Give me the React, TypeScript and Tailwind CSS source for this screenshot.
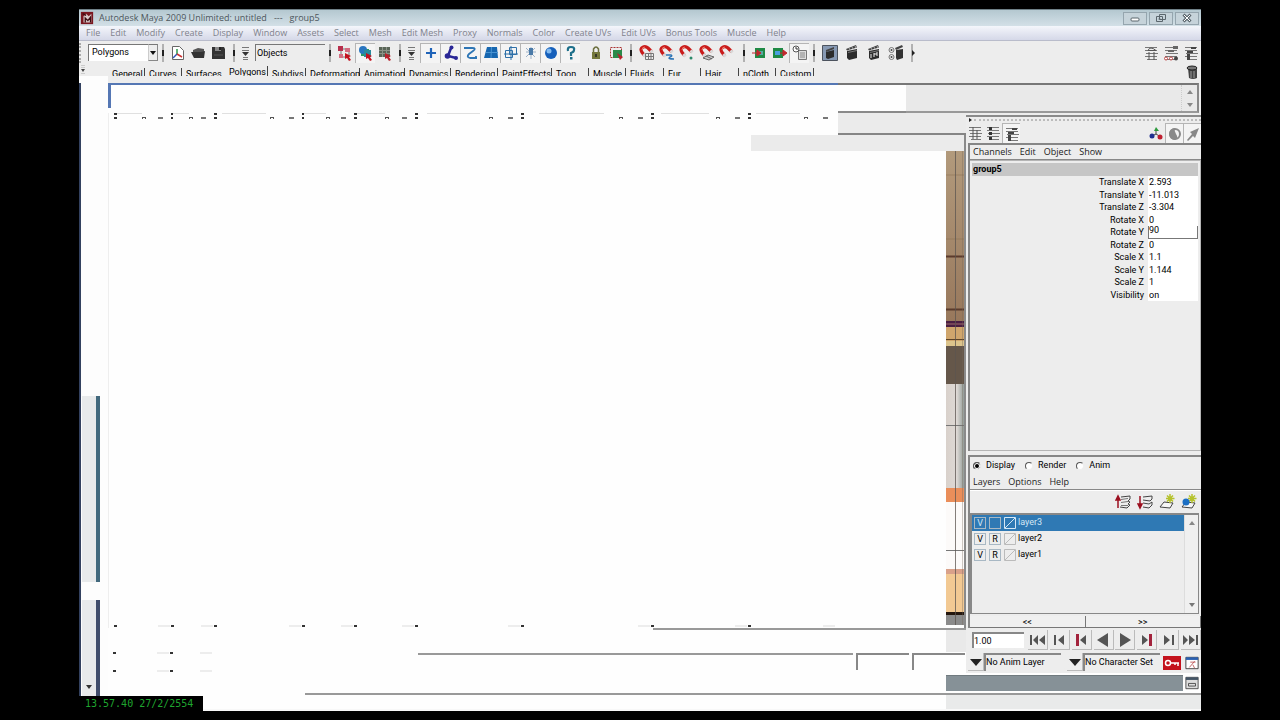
import type { ReactNode } from "react";

const ui = "font-[Roboto,'Liberation_Sans',sans-serif] text-[9px]";
const segoe = "font-['Open_Sans','Noto_Sans',sans-serif] text-[9px]";

const menus = ["File", "Edit", "Modify", "Create", "Display", "Window", "Assets", "Select", "Mesh", "Edit Mesh", "Proxy", "Normals", "Color", "Create UVs", "Edit UVs", "Bonus Tools", "Muscle", "Help"];

const shelves = [
  { name: "General", width: "w-[37px]" },
  { name: "Curves", width: "w-[37px]" },
  { name: "Surfaces", width: "w-[43px]" },
  { name: "Polygons", width: "w-[43px]" },
  { name: "Subdivs", width: "w-[38px]" },
  { name: "Deformation", width: "w-[54px]" },
  { name: "Animation", width: "w-[45px]" },
  { name: "Dynamics", width: "w-[46px]" },
  { name: "Rendering", width: "w-[47px]" },
  { name: "PaintEffects", width: "w-[54px]" },
  { name: "Toon", width: "w-[37px]" },
  { name: "Muscle", width: "w-[37px]" },
  { name: "Fluids", width: "w-[38px]" },
  { name: "Fur", width: "w-[37px]" },
  { name: "Hair", width: "w-[38px]" },
  { name: "nCloth", width: "w-[37px]" },
  { name: "Custom", width: "w-[38px]" },
];

const channels = [
  { name: "Translate X", value: "2.593" },
  { name: "Translate Y", value: "-11.013" },
  { name: "Translate Z", value: "-3.304" },
  { name: "Rotate X", value: "0" },
  { name: "Rotate Y", value: "90", active: true },
  { name: "Rotate Z", value: "0" },
  { name: "Scale X", value: "1.1" },
  { name: "Scale Y", value: "1.144" },
  { name: "Scale Z", value: "1" },
  { name: "Visibility", value: "on" },
];

const layers = [
  { name: "layer3", ref: "", selected: true },
  { name: "layer2", ref: "R", selected: false },
  { name: "layer1", ref: "R", selected: false },
];

// widths of the tool cells, each one starts with a small dark mark
const cells = ["w-[57px]", "w-[43px]", "w-[88px]", "w-[52px]", "w-[61px]", "w-[106px]", "w-[130px]", "w-[97px]", "w-[88px]"];

function Svg({ children, size = "size-4" }: { children: ReactNode; size?: string }) {
  return (
    <svg viewBox="0 0 16 16" className={`${size} shrink-0`} fill="none" aria-hidden="true">
      {children}
    </svg>
  );
}

function Tool({ label, children, sunken = false, width = "w-5" }: { label: string; children: ReactNode; sunken?: boolean; width?: string }) {
  return (
    <button
      type="button"
      aria-label={label}
      className={`flex h-5 shrink-0 items-center justify-center ${width} ${
        sunken ? "border-t border-l border-[#b5b5b5] bg-[#f4f4f4]" : ""
      }`}
    >
      <Svg>{children}</Svg>
    </button>
  );
}

function Bar({ arrow = false }: { arrow?: boolean }) {
  return (
    <svg viewBox="0 0 10 20" className="h-5 w-2.5 shrink-0" aria-hidden="true">
      <path d="M5 1v18" stroke="#777" />
      <path d={arrow ? "M5 7l3 3-3 3z" : "M4 7h2v6H4z"} fill="#222" />
    </svg>
  );
}

function Mask() {
  return (
    <svg viewBox="0 0 12 16" className="h-4 w-3 shrink-0" aria-hidden="true">
      <path d="M3 2.500h7M3 5.500h7M4 12.500h5M4 14.500h5" stroke="#777" />
      <path d="M3 7h7l-3.500 4z" fill="#333" />
    </svg>
  );
}

function Magnet({ children }: { children?: ReactNode }) {
  return (
    <>
      <path d="M5.500 10.500L2.800 7Q.800 3.500 3.800 2.200Q6.500 .800 9 3L12.500 6.500" stroke="#c91c1c" strokeWidth="3.200" />
      <path d="M4.500 9l2 2.600M11.500 5.500l2 2" stroke="#d8d8d8" strokeWidth="3" />
      <path d="M3 5q0-3 3-3" stroke="#ee7a6a" />
      {children}
    </>
  );
}

function Clapper() {
  return (
    <>
      <path d="M3 6l10-2v9l-8 2-2-2z" fill="#2c2c2c" />
      <path d="M2 4l10-4 1 2.500-10 3z" fill="#444" />
      <path d="M5 3l1 2M8 2l1 2M11 1l1 2" stroke="#aaa" />
      <path d="M4 7.500l9-2" stroke="#777" />
    </>
  );
}

function ListIcon({ variant = 0 }: { variant?: number }) {
  return (
    <>
      <path d="M2 2.500h12M2 5.500h12M3 8.500h12M2 11.500h12M4 14.500h10" stroke="#777" />
      {variant === 0 && <path d="M6 2v12M10 5v9" stroke="#555" />}
      {variant === 1 && <path d="M4 2h3v3H4zM4 7h3v3H4zM4 12h3v3H4z" fill="#333" />}
      {variant === 2 && <path d="M8 2h5v2H8zM4 6h6v2H4zM4 9h3v6H4z" fill="#444" />}
      {variant === 3 && (
        <>
          <path d="M5 5.500q2-5 8 0z" fill="#eee" stroke="#555" />
          <path d="M6 7v8M11 7v8" stroke="#555" />
        </>
      )}
      {variant === 4 && (
        <>
          <path d="M10 1h5v3h-5zM5 5h6v2H5z" fill="#666" />
          <circle cx="3" cy="13.500" r="1.500" fill="#fff" stroke="#b44" />
          <circle cx="8" cy="13.500" r="1.500" fill="#fff" stroke="#b44" />
          <circle cx="13" cy="13.500" r="2" fill="#444" />
        </>
      )}
    </>
  );
}

function Star() {
  return <path d="M11 0v9M7 4.500h8.500M8 1.500l6 6M14 1.500l-6 6" stroke="#b5c22c" strokeWidth="1.500" />;
}

function TitleBar() {
  return (
    <header className="flex h-[17px] items-center border-t border-[#6f8087] bg-linear-to-b from-[#b4c8d0] to-[#d3e0e7] pl-px">
      <Svg size="size-3.5">
        <rect x="1" y="1" width="14" height="14" fill="#7a1720" />
        <path d="M4 13V6l3-3 3 3 3-3v10z" fill="#d9c9c9" />
        <path d="M6 13V8l3 3 3-4v6M3 3l4 2" stroke="#3d0d12" strokeWidth="1.500" />
      </Svg>
      <h1 className={`${segoe} ml-[5px] flex-1 leading-4 whitespace-pre text-[#4c565c]`}>
        Autodesk Maya 2009 Unlimited: untitled{"   "}---{"   "}group5
      </h1>
      <div className="mr-[2px] flex gap-[2px]">
        {["Minimize", "Restore", "Close"].map((name) => (
          <button key={name} type="button" aria-label={name} className="flex h-[13px] w-6 items-center justify-center border border-[#95a5ae] bg-[#c6d3da]">
            <svg viewBox="0 0 12 10" className="h-2.5 w-3" fill="none" stroke="#5b666d">
              {name === "Minimize" && <rect x="2" y="5" width="8" height="3" rx="1" fill="#fff" />}
              {name === "Restore" && <path d="M4.500 1.500h6v5h-6zM1.500 3.500h6v5h-6zM3.500 6h2" />}
              {name === "Close" && (
                <>
                  <path d="M2.500 1.500l7 7M9.500 1.500l-7 7" strokeWidth="3" />
                  <path d="M3 2l6 6M9 2L3 8" stroke="#fff" />
                </>
              )}
            </svg>
          </button>
        ))}
      </div>
    </header>
  );
}

function StatusLine() {
  return (
    <div className="flex h-[23px] items-center overflow-hidden">
      <div className="mr-px h-5 w-2 shrink-0 border-l-2 border-dotted border-[#aaa]" />
      <select aria-label="Menu set" className={`${ui} h-[17px] w-[60px] shrink-0 appearance-none border-t border-l border-[#777] bg-white pl-[3px] text-black`}>
        <option>Polygons</option>
      </select>
      <div className="flex h-[17px] w-2.5 shrink-0 items-center justify-center border border-t-[#777] border-r-[#888] border-b-[#888] border-l-[#ccc]">
        <svg viewBox="0 0 8 8" className="size-2"><path d="M1 2h6L4 6z" fill="#111" /></svg>
      </div>
      <Bar />
      <Tool label="New scene">
        <path d="M2.500 1.500h7l4 4v9h-11z" fill="#fff" stroke="#666" />
        <path d="M7 9V4" stroke="#2a9a48" strokeWidth="1.500" />
        <path d="M7 9l-4 4" stroke="#2f55b5" strokeWidth="1.500" />
        <path d="M7 9l5 3" stroke="#c33" strokeWidth="1.500" />
      </Tool>
      <Tool label="Open scene">
        <path d="M3 5l5-2 6 1v3H5l-2 4z" fill="#555" />
        <path d="M1 7h10l4-1-1 7H4z" fill="#333" />
      </Tool>
      <Tool label="Save scene">
        <path d="M2 2h12l1 2v10H2z" fill="#333" />
        <path d="M5 2h6v4H5z" fill="#888" />
        <path d="M9 2h2v3H9z" fill="#222" />
        <path d="M4 10h9" stroke="#555" />
      </Tool>
      <div className="w-px shrink-0" />
      <Bar />
      <Mask />
      <input
        aria-label="Selection mask"
        defaultValue="Objects"
        className={`${ui} ml-1 h-[17px] w-[70px] shrink-0 border-t border-l border-[#777] bg-[#ededed] pl-px text-black`}
      />
      <Bar />
      <Tool label="Select by hierarchy">
        <path d="M4 4h8v8M4 5v7h7" stroke="#777" />
        <path d="M1 1h5v5H1z" fill="#b8304d" />
        <path d="M8 3h5v4H8zM2 9h4v4H2z" fill="#d46c80" />
        <path d="M8 8l6 3-2 1 2 3-2 1-2-3-2 1z" fill="#c3121f" />
      </Tool>
      <Tool label="Select by object" sunken>
        <path d="M3 4h8v7H3z" fill="#2b9a64" />
        <circle cx="5" cy="5" r="4" fill="#2a76c0" />
        <path d="M6 5h7v7H6z" fill="#2a8a9c" />
        <path d="M8 8l6 3-2 1 2 3-2 1-2-3-2 1z" fill="#c3121f" />
      </Tool>
      <Tool label="Select by component">
        <path d="M2 2h11v10H2z" fill="#5a6558" />
        <path d="M2 5.500h11M2 8.500h11M5.500 2v10M9.500 2v10" stroke="#8b9488" />
        <path d="M8 8l6 3-2 1 2 3-2 1-2-3-2 1z" fill="#b7222c" />
      </Tool>
      <Bar />
      <Mask />
      <div className="w-[3px] shrink-0" />
      <Tool label="Handles" sunken><path d="M8 3v10M3 8h10" stroke="#1f63b8" strokeWidth="2.200" /></Tool>
      <Tool label="Joints" sunken>
        <path d="M8 3L5 11l8 2" stroke="#2a2796" strokeWidth="2.500" />
        <circle cx="8.500" cy="2.500" r="2" fill="#2a2796" /><circle cx="4.500" cy="11" r="2.800" fill="#2a2796" /><circle cx="13" cy="13" r="2" fill="#2a2796" />
      </Tool>
      <Tool label="Curves" sunken><path d="M1 3h8q5 0 1 3L6 9q-3 3 1 4h7M13 11v3" stroke="#2d75b5" strokeWidth="1.800" /></Tool>
      <Tool label="Surfaces" sunken>
        <path d="M4 2h10l1 11H1z" fill="#1767b0" />
        <path d="M3 7.500h12M8.500 2L8 13" stroke="#4a94d2" />
      </Tool>
      <Tool label="Deformations" sunken><path d="M2.500 5.500h7v7h-7zM6.500 2.500h7v7h-7zM1 9h14M8 1v14" stroke="#2f70a8" /></Tool>
      <Tool label="Dynamics" sunken>
        <path d="M3 3l9 9M12 3l-9 9M8 2v12M3 7h10" stroke="#9db2c8" />
        <path d="M6 3h4v7H6z" fill="#4a7aa8" />
      </Tool>
      <Tool label="Rendering" sunken>
        <circle cx="8" cy="8" r="6" fill="#1660bb" /><circle cx="6" cy="6" r="2.500" fill="#82baf0" />
      </Tool>
      <Tool label="Miscellaneous" sunken>
        <path d="M5 6q-1-4 3-4t3 3q0 2-3 3v3" stroke="#1d6f8a" strokeWidth="2.200" />
        <path d="M7 12h2.500v2.500H7z" fill="#1d6f8a" />
      </Tool>
      <div className="w-1.5 shrink-0" />
      <Tool label="Lock selection">
        <path d="M5.500 7V4q2.500-4 5 0v3" stroke="#6d7040" strokeWidth="1.500" />
        <path d="M4 7h8v7H4z" fill="#75783c" />
        <path d="M8 9v3" stroke="#222" strokeWidth="1.500" />
      </Tool>
      <Tool label="Highlight selection">
        <path d="M2.500 2.500h11v10h-11z" stroke="#a33" strokeDasharray="2 1" />
        <path d="M5 5h9v8H5z" fill="#2b8a4a" />
        <path d="M9 8l6 4-3 3z" fill="#b7222c" />
      </Tool>
      <Bar />
      <div className="w-px shrink-0" />
      <Tool label="Snap to grids">
        <Magnet><path d="M6.500 8.500h8v6h-8zM9.500 8v6M12 8v6M6 11.500h8" stroke="#777" /></Magnet>
      </Tool>
      <Tool label="Snap to curves">
        <Magnet><path d="M7 10h5q2 1-1 2-3 2 4 2" stroke="#2d75b5" strokeWidth="1.500" /></Magnet>
      </Tool>
      <Tool label="Snap to points"><Magnet><circle cx="12" cy="13" r="1.500" fill="#2b8a6a" /></Magnet></Tool>
      <Tool label="Snap to view planes">
        <Magnet><path d="M4 13l5-3 6 2-5 3zM7 11l6 3" stroke="#666" fill="#ccc" /></Magnet>
      </Tool>
      <Tool label="Make live"><Magnet /></Tool>
      <div className="w-0.5 shrink-0" />
      <Bar />
      <Tool label="Input connections">
        <path d="M4 3h10v10H4z" fill="#1f8a45" /><path d="M7 6h5v4H7z" fill="#58a7a3" />
        <path d="M1 8h5M6 5l4 3-4 3z" stroke="#c1272d" fill="#c1272d" />
      </Tool>
      <Tool label="Output connections">
        <path d="M2 3h10v10H2z" fill="#1f8a45" /><path d="M4 6h5v4H4z" fill="#4a9fe0" />
        <path d="M9 8h4M12 5l4 3-4 3z" stroke="#c1272d" fill="#c1272d" />
      </Tool>
      <Tool label="Construction history" sunken>
        <path d="M6.500 5.500h8v9h-8z" fill="#ddd" stroke="#777" />
        <path d="M8 8h5M8 10h5M8 12h5" stroke="#888" />
        <circle cx="4" cy="4" r="3" fill="#fff" stroke="#555" />
        <path d="M4 2v2h2" stroke="#333" />
      </Tool>
      <Bar />
      <Tool label="Render view" width="w-[22px]">
        <path d="M.500 .500h15v15H.500z" fill="#8799b3" stroke="#4c535e" />
        <path d="M4 7l8-2v7l-6 2-2-1z" fill="#2c2c2c" />
        <path d="M4 5l8-3v2L4 7z" fill="#444" />
      </Tool>
      <Tool label="Render frame" width="w-[22px]"><Clapper /></Tool>
      <Tool label="IPR render" width="w-[22px]">
        <Clapper />
        <path d="M5 9v4M8 8v4M8 9h3M11 7v4" stroke="#eee" />
      </Tool>
      <Tool label="Render settings" width="w-[22px]">
        <path d="M8 5l7-1v9l-6 2-1-2z" fill="#333" />
        <path d="M7 3l7-3 1 2-7 3z" fill="#444" />
        <circle cx="3.500" cy="5" r="2.500" stroke="#777" /><circle cx="3.500" cy="12" r="2.500" stroke="#777" />
        <circle cx="3.500" cy="5" r="1" fill="#444" /><circle cx="3.500" cy="12" r="1" fill="#444" />
      </Tool>
      <Bar arrow />
      <div className="flex-1" />
      <Tool label="Attribute editor"><ListIcon variant={3} /></Tool>
      <Tool label="Tool settings"><ListIcon variant={4} /></Tool>
      <Tool label="Channel box"><ListIcon variant={2} /></Tool>
    </div>
  );
}

function Shelf() {
  return (
    <div className="flex h-[19px]">
      <div className="flex w-[29px] shrink-0 flex-col">
        <div className="flex h-3 items-center pl-[2px]">
          <svg viewBox="0 0 4 10" className="h-2.5 w-1"><path d="M0 4h4L2 7z" fill="#444" /><path d="M1 0v3M3 0v3M1 8v2M3 8v2" stroke="#aaa" strokeDasharray="1 1" /></svg>
        </div>
        <div className="flex-1 bg-[#fdfdfd]" />
      </div>
      <div className={`${ui} flex h-3 flex-1 items-start overflow-hidden leading-3`} role="tablist">
        {shelves.map(({ name, width }) => (
          <button
            key={name}
            type="button"
            role="tab"
            aria-selected={name === "Polygons"}
            className={`h-3 shrink-0 border-r border-[#444] pl-[4px] text-left whitespace-nowrap text-black ${width} ${
              name === "Polygons" ? "mt-[2px]" : "mt-[4px]"
            } ${name === "Surfaces" ? "border-r-transparent" : ""}`}
          >
            {name}
          </button>
        ))}
      </div>
      <button type="button" aria-label="Delete" className="mr-px size-4">
        <Svg>
          <path d="M4 4h9v10q-4 2-8 0z" fill="#444" />
          <ellipse cx="8" cy="4" rx="5" ry="2" fill="#777" stroke="#222" />
          <path d="M7 7v7M10 7v7" stroke="#999" />
        </Svg>
      </button>
    </div>
  );
}

function ShelfStrip() {
  return (
    <div className="flex h-[30px]">
      <div className="flex w-[730px] flex-col">
        <div className="h-[25px] border-t-2 border-l-[3px] border-[#5577b4] bg-[#fefefe]" />
      </div>
      <div className="w-[68px] border-y-2 border-t-[#777] border-b-[#8a8a8a] bg-[#fefefe]" />
      <div className="mr-[2px] flex flex-1 justify-end border-y-2 border-r-2 border-t-[#777] border-r-[#888] border-b-[#999] bg-[#e9e9e9]">
        <div className="flex w-4 flex-col items-center justify-around border-l border-dotted border-[#ccc]">
          <svg viewBox="0 0 6 4" className="h-1 w-1.5"><path d="M0 4l3-4 3 4z" fill="#888" /></svg>
          <svg viewBox="0 0 6 4" className="h-1 w-1.5"><path d="M0 0h6L3 4z" fill="#888" /></svg>
        </div>
      </div>
    </div>
  );
}

function ToolCells() {
  return (
    <div className="flex h-1.5 flex-1 overflow-hidden pl-[5px]">
      {cells.map((width, i) => (
        <div key={i} className={`${width} flex shrink-0 justify-between`}>
          <div className="flex w-[3px] flex-col justify-between">
            <div className="h-[2px] bg-[#333]" />
            <div className="h-[2px] bg-[#333]" />
          </div>
          <div className="w-1/2 border-t border-[#e0e0e0]" />
          <div className="mr-2 flex w-6 items-end justify-between">
            <div className="h-[2px] w-1 border-x border-t border-[#555]" />
            <div className="h-[2px] w-[5px] bg-[#777]" />
          </div>
        </div>
      ))}
    </div>
  );
}

function Marks({ count }: { count: number }) {
  return (
    <div className="flex h-[3px] overflow-hidden pl-[5px]">
      {cells.slice(0, count).map((width, i) => (
        <div key={i} className={`${width} flex shrink-0 justify-between`}>
          <div className="h-[2px] w-[3px] bg-[#333]" />
          <div className="mr-px h-[2px] w-3 bg-[#ededed]" />
        </div>
      ))}
    </div>
  );
}

function ImagePlane() {
  return (
    <svg viewBox="0 0 18 474" preserveAspectRatio="none" className="h-0 min-h-full w-[18px] shrink-0" aria-hidden="true">
      <defs>
        <linearGradient id="wall" x1="0" y1="0" x2="0" y2="1">
          <stop offset="0" stopColor="#b29a7c" />
          <stop offset="1" stopColor="#98785c" />
        </linearGradient>
        <linearGradient id="glow" x1="0" y1="0" x2="1" y2="0">
          <stop offset="0" stopColor="#d9d1cb" />
          <stop offset=".6" stopColor="#ded9d5" />
          <stop offset="1" stopColor="#929c98" />
        </linearGradient>
      </defs>
      <rect width="18" height="170" fill="url(#wall)" />
      <path d="M0 24h18M0 88h18" stroke="#8d7355" opacity=".6" />
      <path d="M0 105.500h18M0 158.500h18" stroke="#5b3b2c" strokeWidth="2" />
      <rect y="170" width="18" height="6" fill="#4a1e42" />
      <path d="M0 173h18" stroke="#a06a6a" />
      <rect y="176" width="18" height="19" fill="#d0a66d" />
      <path d="M0 188.500h18" stroke="#5f4528" />
      <rect y="190" width="18" height="5" fill="#dcc48c" />
      <rect y="195" width="18" height="38" fill="#65574a" />
      <rect y="233" width="18" height="104" fill="url(#glow)" />
      <path d="M0 274.500h18" stroke="#767676" />
      <rect y="337" width="18" height="14" fill="#ea8e5a" />
      <rect y="351" width="18" height="67" fill="#fcfaf9" />
      <path d="M0 399.500h18" stroke="#777" />
      <rect y="418" width="18" height="44" fill="#f2c993" />
      <rect y="418" width="18" height="5" fill="#d9a18a" />
      <rect y="461" width="18" height="3" fill="#24170f" />
      <rect y="464" width="18" height="10" fill="#8b8b8b" />
      <path d="M9.500 0v474" stroke="#5c5550" opacity=".75" />
      <path d="M16.500 0v474" stroke="#75675a" opacity=".35" />
    </svg>
  );
}

function Viewport() {
  return (
    <section className="flex min-w-0 flex-1 flex-col border-l border-[#eeeeee]">
      <div className="flex h-[22px] items-start">
        <ToolCells />
        <div className="h-[22px] w-[128px] border-b-2 border-[#858585] bg-[#ebebeb]" />
      </div>
      <div className="flex flex-1 flex-col border-r-2 border-[#8a8a8a] bg-[#fefefe]">
        <div className="ml-auto h-4 w-[213px] bg-[#ebebeb]" />
        <div className="flex flex-1">
          <div className="flex-1 bg-[#fefefe]" />
          <ImagePlane />
        </div>
        <Marks count={9} />
      </div>
    </section>
  );
}

function ChannelBox() {
  return (
    <section className="flex flex-1 flex-col border-t-2 border-l-2 border-[#868686]">
      <nav className={`${segoe} flex h-[15px] items-center gap-2 border-b border-[#888] pl-[3px] text-[#222]`}>
        {["Channels", "Edit", "Object", "Show"].map((name) => (
          <button key={name} type="button">{name}</button>
        ))}
      </nav>
      <div className="flex-1 border-t border-r border-b border-[#b5b5b5] px-[2px] pt-[2px]">
        <h2 className={`${ui} h-[13px] bg-[#c6c6c6] pl-px leading-[13px] font-bold text-black`}>group5</h2>
        <div className={`${ui} grid h-[125px] grid-rows-10`}>
          {channels.map((c) => (
            <div key={c.name} className="flex items-center justify-end text-black">
              <label htmlFor={c.name} className="pr-1 leading-3">{c.name}</label>
              <input
                id={c.name}
                defaultValue={c.value}
                className={`h-full w-[50px] bg-white ${c.active ? "border-r border-b border-l border-[#777] pb-1" : "border-l border-white"}`}
              />
            </div>
          ))}
        </div>
      </div>
    </section>
  );
}

function LayerEditor() {
  return (
    <section className="mt-1 border-t-2 border-l-2 border-[#868686]">
      <div className={`${ui} flex h-[18px] items-center pl-[3px] text-black`}>
        {["Display", "Render", "Anim"].map((name) => (
          <label key={name} className="mr-[10px] flex items-center gap-[5px]">
            <input
              type="radio"
              name="layer-mode"
              defaultChecked={name === "Display"}
              className="size-2 appearance-none rounded-full border border-[#eee] border-t-[#555] border-l-[#555] bg-white checked:bg-black checked:shadow-[inset_0_0_0_1px_white]"
            />
            {name}
          </label>
        ))}
      </div>
      <nav className={`${segoe} flex h-[15px] items-center gap-2 border-b border-[#888] pl-[3px] text-[#222]`}>
        {["Layers", "Options", "Help"].map((name) => (
          <button key={name} type="button">{name}</button>
        ))}
      </nav>
      <div className="flex h-[23px] items-center justify-end gap-0.5 border-t border-white pr-[2px]">
        <Tool label="Move layer up">
          <path d="M6 3l9-1v3l-2 2 2 1-2 2 2 1-3 3-7-1" stroke="#444" /><path d="M6 5.500l7-1M6 8.500l7-1M6 11.500h7" stroke="#777" />
          <path d="M3 14V5M1 6l2-4 2 4z" stroke="#9c1020" strokeWidth="1.500" fill="#9c1020" />
        </Tool>
        <Tool label="Move layer down">
          <path d="M6 3l9-1v3l-2 2-7-1M6 9l6 1 3-2v3M6 13l6 1 3-3" stroke="#444" />
          <path d="M3 2v9M1 10l2 4 2-4z" stroke="#9c1020" strokeWidth="1.500" fill="#9c1020" />
        </Tool>
        <Tool label="New empty layer">
          <path d="M1 13l4-5 9 1-3 5z" fill="#f7f7f7" stroke="#444" /><Star />
        </Tool>
        <Tool label="New layer from selected">
          <path d="M1 13l4-5 9 1-3 5z" fill="#f7f7f7" stroke="#444" /><Star /><circle cx="5" cy="8" r="3.500" fill="#1c6fc4" />
        </Tool>
      </div>
      <div className="mr-[2px] flex h-[101px] border border-t-2 border-l-2 border-[#888]">
        <ul className={`${ui} flex-1`}>
          {layers.map((l) => (
            <li key={l.name} className={`flex h-4 items-center ${l.selected ? "bg-[#2f79b4] text-[#d4e7f5]" : "text-black"}`}>
              <button type="button" aria-label={`Visibility ${l.name}`} className="mr-[3px] ml-0.5 h-3 w-3 border border-[#a8b8c4] text-center leading-[10px]">V</button>
              <button type="button" aria-label={`Reference ${l.name}`} className="mr-[3px] h-3 w-3 border border-[#a8b8c4] text-center leading-[10px]">{l.ref}</button>
              <svg viewBox="0 0 12 12" className="mr-[2px] size-3" fill="none" stroke={l.selected ? "#d4e7f5" : "#bbb"}><path d="M.500 11.500V.500h11M.500 11.500l11-11M11.500 1v10.500H1" /></svg>
              {l.name}
            </li>
          ))}
        </ul>
        <div className="flex w-[14px] flex-col items-center justify-between border-l border-[#ddd] bg-[#f0f0f0] py-1.5">
          <svg viewBox="0 0 6 4" className="h-1 w-1.5"><path d="M0 4l3-4 3 4z" fill="#888" /></svg>
          <svg viewBox="0 0 6 4" className="h-1 w-1.5"><path d="M0 0h6L3 4z" fill="#777" /></svg>
        </div>
      </div>
      <div className={`${ui} mt-[2px] flex h-3 leading-3 text-black`}>
        <button type="button" className="flex-1 border-r border-b border-[#777] bg-[#f0f0f0]">&lt;&lt;</button>
        <button type="button" className="flex-1 border-r border-b border-[#777] bg-[#f0f0f0]">&gt;&gt;</button>
      </div>
    </section>
  );
}

function Dock() {
  return (
    <aside className="flex w-[235px] shrink-0 flex-col pt-[2px]">
      <div className="flex h-2 items-center border-t-2 border-[#8a8a8a] pl-[3px]">
        <svg viewBox="0 0 3 4" className="h-1 w-[3px]"><path d="M0 0l3 2-3 2z" fill="#222" /></svg>
        <div className="ml-0.5 flex-1 border-t-2 border-dotted border-[#bbb]" />
      </div>
      <div className="flex h-5 items-center">
        <Tool label="Channel names" width="w-[18px]"><ListIcon variant={0} /></Tool>
        <Tool label="Channel list" width="w-[18px]"><ListIcon variant={1} /></Tool>
        <Tool label="Channel layout" width="w-[18px]" sunken><ListIcon variant={2} /></Tool>
        <div className="flex-1" />
        <Tool label="Manipulators" width="w-[18px]">
          <path d="M8 9V4M8 9l-4 2M8 9l5 3" stroke="#444" /><path d="M8 2l3 4H6z" fill="#2c9a3c" />
          <circle cx="4" cy="11" r="2.500" fill="#20308f" /><circle cx="12" cy="12" r="2.500" fill="#bf1f30" />
        </Tool>
        <Tool label="Speed" width="w-[18px]" sunken>
          <circle cx="8" cy="8" r="5" fill="#f4f4f4" stroke="#8a8a8a" strokeWidth="2" /><path d="M8 2a6 6 0 000 12q4-2 1-6-2-3-1-6z" fill="#8a8a8a" />
        </Tool>
        <Tool label="Hyperbolic" width="w-[18px]" sunken><path d="M14 2L10 12 8 10l-5 5-1-1 5-6-2-2z" fill="#888" /></Tool>
      </div>
      <div className="flex flex-1 flex-col pl-[2px]">
        <ChannelBox />
        <LayerEditor />
      </div>
    </aside>
  );
}

const playback = [
  { name: "Go to start", d: "M0 3h2v10H0zM8 3v10L3 8zM15 3v10L9 8z" },
  { name: "Step back frame", d: "M3 3h2v10H3zM13 3v10L7 8z" },
  { name: "Step back key", d: "M13 3v10L7 8z", key: "M3 2h3v12H3z" },
  { name: "Play backwards", d: "M13 1v14L2 8z" },
  { name: "Play forwards", d: "M3 1v14l11-7z" },
  { name: "Step forward key", d: "M3 3v10l6-5z", key: "M10 2h3v12h-3z" },
  { name: "Step forward frame", d: "M3 3v10l6-5zM11 3h2v10h-2z" },
  { name: "Go to end", d: "M1 3v10l5-5zM7 3v10l6-5zM14 3h2v10h-2z" },
];

function TimeControls() {
  return (
    <div className="flex h-6">
      <div className="ml-[545px] flex-1 border-t-2 border-[#999]" />
      <div className="w-5 border-t-2 border-[#999] bg-[#e9e9e9]" />
      <div className="flex w-[235px] items-center pl-1.5">
        <input aria-label="Current time" defaultValue="1.00" className={`${ui} mr-1 h-4 w-[52px] border-t-2 border-l-2 border-[#888] bg-white text-black`} />
        <div className="flex flex-1 justify-between">
          {playback.map((p) => (
            <button key={p.name} type="button" aria-label={p.name} className="flex h-5 w-5 items-center justify-center border-r border-b border-[#bbb]">
              <Svg>
                <path d={p.d} fill="#555" />
                {p.key && <path d={p.key} fill="#a3233c" />}
              </Svg>
            </button>
          ))}
        </div>
      </div>
    </div>
  );
}

function SetSelect({ name }: { name: string }) {
  return (
    <>
      <div className="flex w-4 items-center justify-center border-r border-b border-[#bbb]">
        <svg viewBox="0 0 12 8" className="h-2 w-3"><path d="M0 1h12L6 8z" fill="#222" /></svg>
      </div>
      <select aria-label={name} className={`${ui} w-[77px] appearance-none border-t-2 border-l-2 border-[#888] bg-[#ededed] text-black`}>
        <option>{name}</option>
      </select>
    </>
  );
}

function RangeRow() {
  return (
    <div className="flex h-[21px]">
      <div className="w-[310px] shrink-0">
        <Marks count={2} />
        <div className="h-[15px]" />
        <Marks count={2} />
      </div>
      <div className="flex flex-1 gap-[3px] pt-px">
        <div className="flex-1 self-start border-t-2 border-[#999]" />
        <input aria-label="Playback end" className="h-[17px] w-[53px] border-t-2 border-l-2 border-[#888] bg-[#fefefe]" />
        <input aria-label="Animation end" className="h-[17px] w-[53px] border-t-2 border-l-2 border-[#888] bg-[#fefefe]" />
        <div className="flex h-[18px]">
          <SetSelect name="No Anim Layer" />
          <div className="w-[6px]" />
          <SetSelect name="No Character Set" />
        </div>
      </div>
      <div className="flex items-center gap-1 pr-[2px] pl-[3px]">
        <button type="button" aria-label="Auto keyframe" className="flex h-3.5 w-[18px] items-center justify-center bg-[#c4121c]">
          <svg viewBox="0 0 16 10" className="h-2.5 w-4" fill="none" stroke="#fff" strokeWidth="1.500"><circle cx="4" cy="5" r="2.500" /><path d="M6.500 5H15M11 5v2M14 5v3" /></svg>
        </button>
        <button type="button" aria-label="Preferences" className="size-3.5">
          <Svg size="size-3.5">
            <path d="M1 1.500h14v13H1z" fill="#fff" stroke="#333" /><path d="M1 3h14" stroke="#2a5fb0" strokeWidth="3" />
            <path d="M5 13l6-7M6 7h6M9 10l2 4" stroke="#b55" />
          </Svg>
        </button>
      </div>
    </div>
  );
}

export default function App() {
  return (
    <div className="flex min-h-screen flex-col bg-black pt-[9px] pr-[79px] pb-[9px] pl-[79px]">
      <main className="relative flex flex-1 flex-col border-b-2 border-[#f8f8f8] bg-[#ededed]">
        <TitleBar />
        <nav className={`${segoe} flex h-[15px] items-center gap-[10px] border-b border-[#b9bccb] bg-linear-to-b from-[#f4f6fb] to-[#d5d8e8] pl-[7px] text-[#80828c]`}>
          {menus.map((name) => (
            <button key={name} type="button" className="shrink-0">{name}</button>
          ))}
        </nav>
        <StatusLine />
        <Shelf />
        <div className="flex flex-1">
          <div className="flex w-[29px] shrink-0 flex-col border-l-2 border-[#33415f] bg-[#fdfdfd] pr-2 pl-px">
            <div className="h-[313px]" />
            <div className="h-[186px] border-r-4 border-[#42697d] bg-[#e8eaeb]" />
            <div className="h-[18px]" />
            <div className="flex flex-1 items-end justify-center border-r-4 border-[#404d6b] bg-[#e8eaeb] pb-5">
              <svg viewBox="0 0 6 4" className="h-1 w-1.5"><path d="M0 0h6L3 4z" fill="#333" /></svg>
            </div>
          </div>
          <div className="flex min-w-0 flex-1 flex-col bg-[#fefefe]">
            <div className="bg-linear-to-r from-[#fefefe] from-[730px] to-[#ededed] to-[730px]">
              <ShelfStrip />
            </div>
            <div className="flex flex-1">
              <Viewport />
              <div className="flex bg-[#ededed]">
                <Dock />
              </div>
            </div>
            <div className="bg-linear-to-r from-[#fefefe] from-[858px] to-[#ededed] to-[858px]">
              <TimeControls />
              <RangeRow />
            </div>
            <div className="flex h-[20px] items-center">
              <div className="flex-1" />
              <div className="h-4 w-[237px] border-t border-[#707a7f] bg-[#869197]" />
              <button type="button" aria-label="Script editor" className="mr-[2px] ml-[2px] size-3.5">
                <Svg size="size-3.5">
                  <path d="M1 1.500h14v13H1z" fill="#ddd" stroke="#444" /><path d="M1 3h14" stroke="#456" strokeWidth="3" />
                  <path d="M4 8.500h8v3H4z" stroke="#444" />
                </Svg>
              </button>
            </div>
            <div className="ml-[197px] flex h-4 justify-end border-t-2 border-[#999]">
              <div className="w-[255px] bg-[#e9eaea]" />
            </div>
          </div>
        </div>
        <time className="absolute bottom-[-2px] left-0 h-[15px] w-[124px] bg-black pl-1.5 font-['DejaVu_Sans_Mono',monospace] text-[10px] leading-[15px] text-[#1fa52f]">
          13.57.40 27/2/2554
        </time>
      </main>
    </div>
  );
}
